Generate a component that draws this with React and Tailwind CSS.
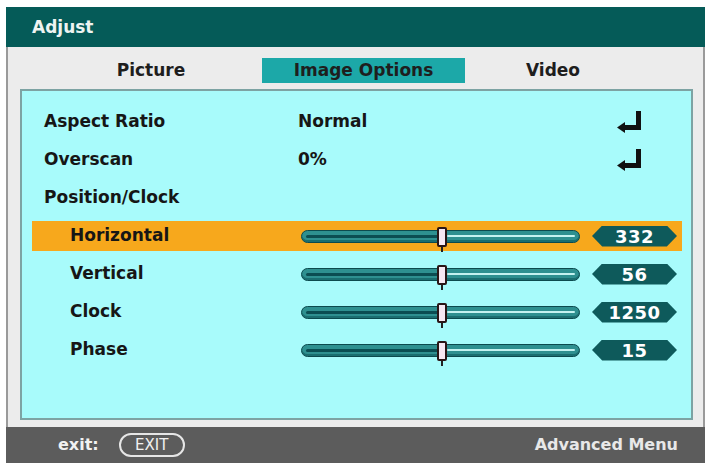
import React from "react";

const font = { fontFamily: '"DejaVu Sans", "Liberation Sans", sans-serif' };

function EnterIcon() {
    return (
        <svg width="24" height="23" viewBox="0 0 24 23">
            <rect x="19" y="0" width="5" height="19" fill="#111" />
            <rect x="7" y="14" width="17" height="5" fill="#111" />
            <polygon points="0,16.5 8,11 8,22" fill="#111" />
        </svg>
    );
}

function Slider({ value }) {
    return (
        <div className="flex items-center">
            <div className="relative w-[279px] h-[13px] rounded-full bg-[#2e9090] border border-[#0c4a4e] shadow-[inset_0_-2px_0_#1a6e70]">
                <div className="absolute left-[4px] top-[4px] w-[135px] h-[3px] rounded-full bg-[#0b4d52]" />
                <div className="absolute left-[145px] right-[4px] top-[4px] h-[2px] rounded-full bg-[#c4f2f0]" />
                <div className="absolute left-[135px] top-[-4px] w-[10px] h-[20px] rounded-[2px] bg-[#f6e8f2] border-2 border-[#2a1616]" />
                <div className="absolute left-[139px] top-[16px] w-[2px] h-[5px] bg-[#222]" />
            </div>
            <div className="ml-[12px] w-[85px] h-[21px] flex items-center justify-center bg-[#0e5a5b] text-white text-[18px] font-bold tracking-[0.5px] [clip-path:polygon(12%_0,88%_0,100%_50%,88%_100%,12%_100%,0_50%)]">
                {value}
            </div>
        </div>
    );
}

export default function App() {
    const subs = [
        { label: "Horizontal", value: "332", active: true },
        { label: "Vertical", value: "56" },
        { label: "Clock", value: "1250" },
        { label: "Phase", value: "15" },
    ];

    return (
        <div className="w-[710px] h-[471px] bg-white pt-[7px] pl-[6px]" style={font}>
            <div className="w-[699px] flex flex-col">
                <div className="h-[40px] bg-[#055b58] flex items-center pl-[26px] pt-[2px] text-[#eef4f2] text-[17px] font-bold">
                    Adjust
                </div>

                <div className="h-[380px] bg-[#ececec] border-x-2 border-[#9a9a9a] flex flex-col">
                    <div className="h-[42px] flex pt-[11px] text-[17px] font-bold text-[#1e1e1e]">
                        <div className="ml-[42px] w-[202px] h-[25px] flex items-center justify-center">Picture</div>
                        <div className="ml-[10px] w-[203px] h-[25px] flex items-center justify-center bg-[#1ca8a8]">Image Options</div>
                        <div className="w-[176px] h-[25px] flex items-center justify-center">Video</div>
                    </div>

                    <div className="ml-[12px] mr-[10px] h-[331px] bg-[#a8fbfb] border-2 border-[#7da3a3] pt-[12px] text-[17px] font-bold text-[#161616]">
                        <div className="h-[38px] flex items-center pl-[22px] pr-[50px]">
                            <div className="w-[254px]">Aspect Ratio</div>
                            <div className="flex-1">Normal</div>
                            <EnterIcon />
                        </div>
                        <div className="h-[38px] flex items-center pl-[22px] pr-[50px]">
                            <div className="w-[254px]">Overscan</div>
                            <div className="flex-1">0%</div>
                            <EnterIcon />
                        </div>
                        <div className="h-[38px] flex items-center pl-[22px]">Position/Clock</div>
                        {subs.map((s) => (
                            <div key={s.label} className="h-[38px] flex items-center">
                                <div
                                    className={
                                        s.active
                                            ? "ml-[10px] w-[650px] h-[30px] flex items-center pl-[38px] bg-[#f7a81c]"
                                            : "ml-[10px] w-[650px] h-[30px] flex items-center pl-[38px]"
                                    }
                                >
                                    <div className="w-[231px]">{s.label}</div>
                                    <Slider value={s.value} />
                                </div>
                            </div>
                        ))}
                    </div>
                </div>

                <div className="h-[36px] bg-[#5c5c5c] flex items-center pl-[52px] pr-[27px] text-[16px] font-bold">
                    <span className="text-[#f2f2f2]">exit:</span>
                    <span className="ml-[20px] w-[66px] h-[24px] rounded-full border-2 border-[#e6e6e6] flex items-center justify-center text-[#f0f0f0] text-[15px] font-normal">
                        EXIT
                    </span>
                    <span className="ml-auto text-[#e8e8e8]">Advanced Menu</span>
                </div>
            </div>
        </div>
    );
}
